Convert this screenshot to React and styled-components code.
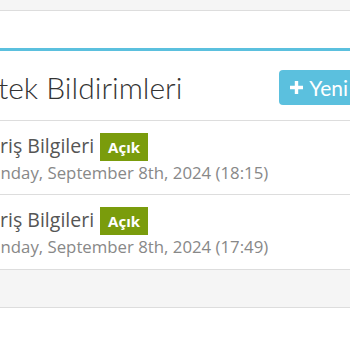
import React from "react";
import styled, { createGlobalStyle } from "styled-components";

const Global = createGlobalStyle`
  html, body { margin: 0; padding: 0; background: #fff; overflow: hidden; width: 350px; height: 350px; }
  body { font-family: "Open Sans", "Liberation Sans", sans-serif; }
`;

const Page = styled.div`
  margin-left: -72px;
  width: 442px;
`;

const PrevFooter = styled.div`
  height: 10px;
  background: #f5f5f5;
  border-bottom: 1px solid #ddd;
  margin-bottom: 37px;
`;

const Box = styled.div`
  border-top: 3px solid #5bc0de;
  background: #fff;
`;

const Header = styled.div`
  display: flex;
  align-items: center;
  height: 69px;
  padding: 0 10px 0 19px;
  border-bottom: 1px solid #ddd;
`;

const Title = styled.h3`
  margin: 0;
  padding-top: 3px;
  font-family: Lato, "Liberation Sans", sans-serif;
  font-weight: 300;
  font-size: 30px;
  line-height: 1;
  color: #333;
`;

const NewButton = styled.button`
  margin-left: auto;
  display: flex;
  align-items: center;
  gap: 5px;
  height: 35px;
  padding: 0 12px 0 10px;
  border: none;
  border-radius: 4px;
  background: #5bc0de;
  color: #fff;
  font-family: Lato, "Liberation Sans", sans-serif;
  font-weight: 400;
  font-size: 21px;
  margin-top: 3px;
`;

const Item = styled.div`
  padding: 12px 10px 10px 53px;
  border-bottom: 1px solid ${(p) => (p.$last ? "transparent" : "#ddd")};
`;

const ItemLine = styled.div`
  line-height: 24px;
`;

const ItemTitle = styled.span`
  font-size: 19.5px;
  color: #555;
`;

const Badge = styled.span`
  display: inline-block;
  margin-left: 6px;
  padding: 4px 8px;
  line-height: 20px;
  font-size: 15px;
  font-weight: 700;
  color: #fff;
  background: #7a9c0c;
`;

const ItemDate = styled.div`
  margin-top: 1px;
  line-height: 22px;
  font-size: 16.8px;
  color: #888;
`;

const Footer = styled.div`
  height: 37px;
  background: #f5f5f5;
  border-top: 1px solid #ddd;
  border-bottom: 1px solid #ddd;
`;

const PlusIcon = () => (
  <svg width="15" height="15" viewBox="0 0 15 15">
    <path d="M7.5 1v13M1 7.5h13" stroke="#fff" strokeWidth="3.4" strokeLinecap="butt" />
  </svg>
);

const items = [
  { title: "Giriş Bilgileri", date: "Sunday, September 8th, 2024 (18:15)" },
  { title: "Giriş Bilgileri", date: "Sunday, September 8th, 2024 (17:49)" },
];

export default function App() {
  return (
    <Page>
      <Global />
      <PrevFooter />
      <Box>
        <Header>
          <Title>Destek Bildirimleri</Title>
          <NewButton>
            <PlusIcon />
            Yeni
          </NewButton>
        </Header>
        {items.map((it, i) => (
          <Item key={i} $last={i === items.length - 1}>
            <ItemLine>
              <ItemTitle>{it.title}</ItemTitle>
              <Badge>Açık</Badge>
            </ItemLine>
            <ItemDate>{it.date}</ItemDate>
          </Item>
        ))}
        <Footer />
      </Box>
    </Page>
  );
}
